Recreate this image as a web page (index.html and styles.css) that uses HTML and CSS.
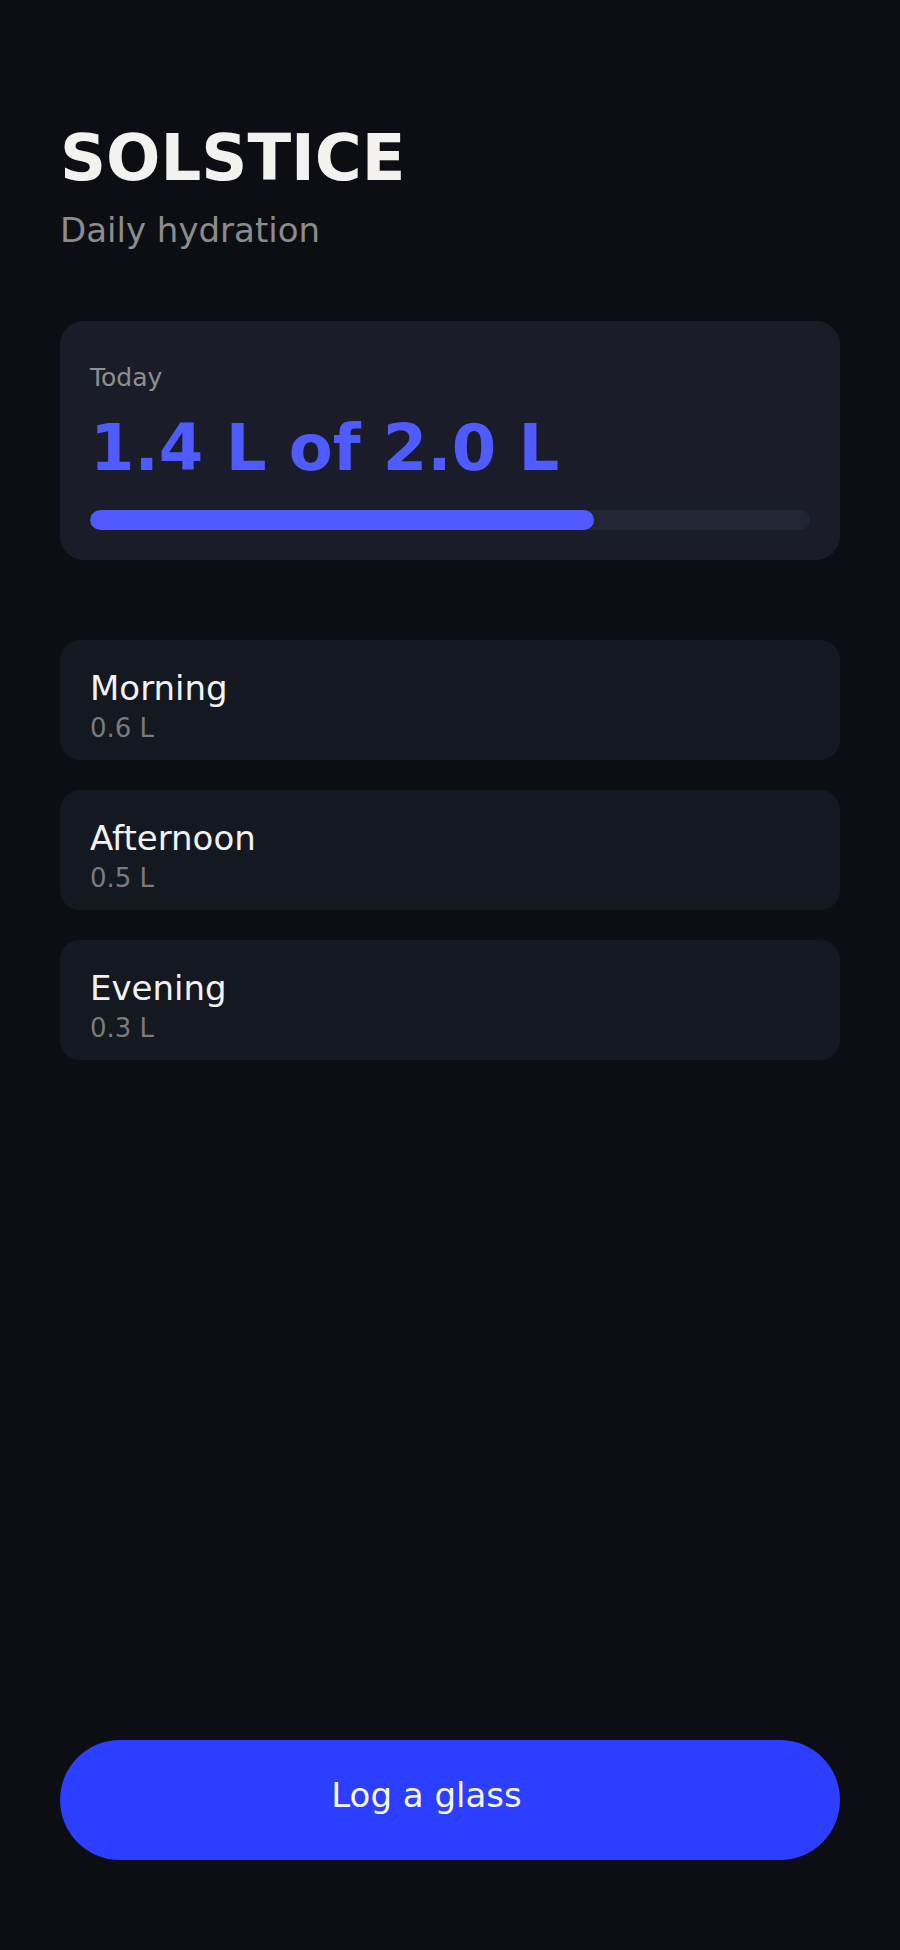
FILE: index.html
```html
<!DOCTYPE html>
<html lang="en">
<head>
    <meta charset="UTF-8">
    <meta name="viewport" content="width=device-width, initial-scale=1.0">
    <title>Solstice - Daily hydration</title>
    <link rel="stylesheet" href="styles.css">
</head>
<body>
    <div class="app">
        <header class="header">
            <h1 class="brand">SOLSTICE</h1>
            <p class="subtitle">Daily hydration</p>
        </header>

        <section class="summary">
            <span class="summary-label">Today</span>
            <div class="summary-total">1.4 L of 2.0 L</div>
            <div class="progress">
                <div class="progress-fill" style="width: 70%"></div>
            </div>
        </section>

        <ul class="entries">
            <li class="entry">
                <span class="entry-name">Morning</span>
                <span class="entry-amount">0.6 L</span>
            </li>
            <li class="entry">
                <span class="entry-name">Afternoon</span>
                <span class="entry-amount">0.5 L</span>
            </li>
            <li class="entry">
                <span class="entry-name">Evening</span>
                <span class="entry-amount">0.3 L</span>
            </li>
        </ul>

        <button class="log-button" type="button">Log a glass</button>
    </div>
</body>
</html>
```

FILE: styles.css
```css
* {
    box-sizing: border-box;
}

body {
    font-family: "DejaVu Sans", Verdana, sans-serif;
    margin: 0;
    padding: 0;
    background-color: #0d0e13;
    color: #f2f2f2;
}

.app {
    height: 100vh;
    display: flex;
    flex-direction: column;
    padding: 120px 60px 90px;
}

.brand {
    margin: 0;
    font-size: 64px;
    line-height: 1.2;
    font-weight: bold;
    color: #f4f2ee;
}

.subtitle {
    margin: 13px 0 0;
    font-size: 34px;
    line-height: 1.2;
    color: #8c8c8c;
}

.summary {
    margin-top: 70px;
    background: #1a1d29;
    border-radius: 24px;
    padding: 42px 30px 30px;
}

.summary-label {
    display: block;
    font-size: 25px;
    line-height: 1.2;
    color: #8f8f8f;
}

.summary-total {
    margin-top: 17px;
    font-size: 64px;
    line-height: 1.2;
    font-weight: bold;
    color: #4f5bff;
}

.progress {
    margin-top: 24px;
    height: 20px;
    border-radius: 10px;
    background: #222533;
    overflow: hidden;
}

.progress-fill {
    height: 100%;
    border-radius: 10px;
    background: #4f5bff;
}

.entries {
    list-style: none;
    margin: 80px 0 0;
    padding: 0;
    display: flex;
    flex-direction: column;
    gap: 30px;
}

.entry {
    height: 120px;
    background: #141821;
    border-radius: 20px;
    padding: 28px 30px 0;
    display: flex;
    flex-direction: column;
}

.entry-name {
    font-size: 34px;
    line-height: 1.2;
    color: #f2f2f2;
}

.entry-amount {
    margin-top: 4px;
    font-size: 26px;
    line-height: 1.2;
    color: #7b7b7b;
}

.log-button {
    margin-top: auto;
    flex-shrink: 0;
    height: 120px;
    width: 100%;
    border: none;
    border-radius: 60px;
    background: #2c3eff;
    color: #f5f5f5;
    font-family: inherit;
    font-size: 34px;
    line-height: 1.2;
    padding: 0 47px 9px 0;
    cursor: pointer;
}
```
